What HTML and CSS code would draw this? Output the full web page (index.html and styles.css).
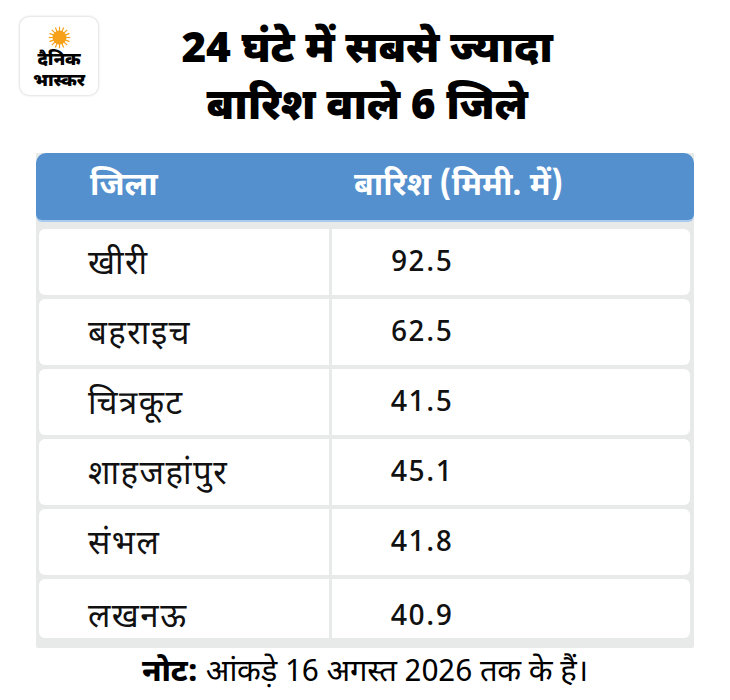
FILE: index.html
```html
<!DOCTYPE html>
<html lang="hi">
<head>
<meta charset="utf-8">
<link rel="stylesheet" href="styles.css">
</head>
<body>
<div class="page">
  <div class="top">
    <div class="logo">
      <svg class="sun" width="23" height="23" viewBox="0 0 30 30">
        <g fill="#f6a11a">
          <circle cx="15" cy="15" r="9"/>
          <g stroke="#f6a11a" stroke-width="1.6">
            <line x1="15" y1="1" x2="15" y2="29"/>
            <line x1="1" y1="15" x2="29" y2="15"/>
            <line x1="5" y1="5" x2="25" y2="25"/>
            <line x1="25" y1="5" x2="5" y2="25"/>
            <line x1="9.6" y1="2" x2="20.4" y2="28"/>
            <line x1="20.4" y1="2" x2="9.6" y2="28"/>
            <line x1="2" y1="9.6" x2="28" y2="20.4"/>
            <line x1="2" y1="20.4" x2="28" y2="9.6"/>
          </g>
        </g>
      </svg>
      <div class="logo-text"><span>दैनिक</span><span>भास्कर</span></div>
    </div>
    <h1 class="title">24 घंटे में सबसे ज्यादा<br>बारिश वाले 6 जिले</h1>
  </div>
  <div class="table">
    <div class="head">
      <div class="c1">जिला</div>
      <div class="c2">बारिश (मिमी. में)</div>
    </div>
    <div class="body">
      <div class="row"><div class="c1">खीरी</div><div class="c2 num">92.5</div></div>
      <div class="row"><div class="c1">बहराइच</div><div class="c2 num">62.5</div></div>
      <div class="row"><div class="c1">चित्रकूट</div><div class="c2 num">41.5</div></div>
      <div class="row"><div class="c1">शाहजहांपुर</div><div class="c2 num">45.1</div></div>
      <div class="row"><div class="c1">संभल</div><div class="c2 num">41.8</div></div>
      <div class="row last"><div class="c1">लखनऊ</div><div class="c2 num">40.9</div></div>
    </div>
  </div>
  <p class="note"><b>नोट:</b> आंकड़े 16 अगस्त 2026 तक के हैं।</p>
</div>
</body>
</html>
```
FILE: styles.css
```css
* { box-sizing: border-box; }
body {
  margin: 0;
  background: #fff;
  font-family: "Noto Sans Devanagari", "Noto Sans", "Liberation Sans", sans-serif;
  color: #111;
}
.page { width: 730px; height: 700px; }
.top {
  height: 153px;
  position: relative;
  display: flex;
  justify-content: center;
}
.logo {
  position: absolute;
  left: 20px;
  top: 17px;
  width: 78px;
  height: 78px;
  background: #fff;
  border-radius: 9px;
  box-shadow: 0 0 3px rgba(0,0,0,0.25);
  display: flex;
  flex-direction: column;
  align-items: center;
  padding-top: 9px;
}
.sun { display: block; }
.logo-text {
  display: flex;
  flex-direction: column;
  align-items: center;
  font-weight: 900;
  font-size: 18px;
  color: #000;
  letter-spacing: -0.2px;
  margin-top: 1px;
}
.logo-text span { display: block; height: 21px; line-height: 21px; }
.title {
  margin: 23px 0 0 0;
  font-size: 43px;
  line-height: 57px;
  font-weight: 900;
  text-align: center;
  color: #000;
  padding-left: 4px;
  letter-spacing: -0.3px;
}
.table {
  margin-left: 36px;
  width: 658px;
  background: #e8eaea;
  padding-bottom: 10px;
  border-radius: 0 0 2px 2px;
}
.head {
  height: 67px;
  background: #5490ce;
  border-radius: 10px 10px 6px 6px;
  box-shadow: 0 2px 0 #a9cbef;
  display: flex;
  align-items: center;
  color: #fff;
  font-weight: 700;
  font-size: 32px;
}
.head .c1 { width: 294px; padding-left: 54px; }
.head .c2 { padding-left: 24px; }
.body {
  padding: 9px 4px 0 3px;
  display: flex;
  flex-direction: column;
  gap: 4px;
}
.row {
  height: 66px;
  background: #fff;
  border-radius: 6px;
  display: flex;
  align-items: stretch;
  font-size: 33px;
}
.row.last { height: 59px; }
.row .c1 { width: 290px; display: flex; align-items: center; padding-left: 49px; padding-top: 6px; letter-spacing: 1.5px; }
.row .c2 { flex: 1; display: flex; align-items: center; border-left: 3px solid #e8eaea; padding-left: 59px; padding-top: 4px; }
.row.last .c1 { padding-top: 20px; }
.row.last .c2 { padding-top: 18px; }
.num { font-size: 29px; font-weight: 500; letter-spacing: 1.5px; }
.note {
  margin: 6px 0 0 0;
  text-align: center;
  font-size: 31px;
  line-height: 40px;
  color: #000;
  letter-spacing: -0.2px;
}
.note b { font-weight: 800; }
```
